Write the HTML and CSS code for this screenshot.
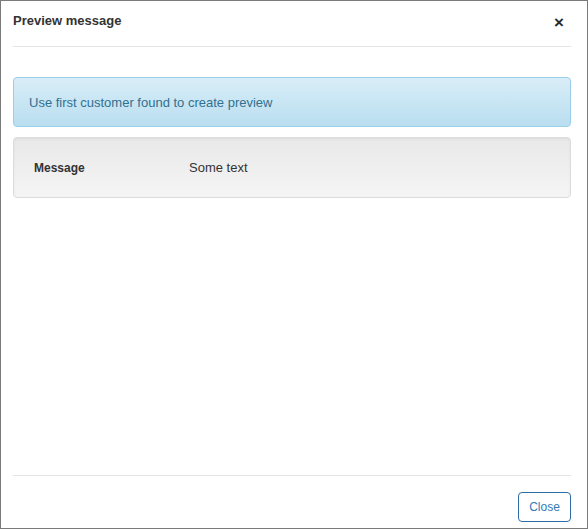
FILE: index.html
```html
<!DOCTYPE html>
<html>
<head>
<meta charset="utf-8">
<link rel="stylesheet" href="styles.css">
</head>
<body>
<div class="modal">
  <div class="modal-header">
    <h4 class="title">Preview message</h4>
    <button class="close" type="button">×</button>
  </div>
  <div class="modal-body">
    <div class="alert">Use first customer found to create preview</div>
    <div class="well">
      <span class="label">Message</span>
      <span class="value">Some text</span>
    </div>
  </div>
  <div class="modal-footer">
    <button class="btn" type="button">Close</button>
  </div>
</div>
</body>
</html>
```
FILE: styles.css
```css
html, body {
  margin: 0;
  padding: 0;
  background: #fff;
}
body {
  font-family: "Liberation Sans", Arial, sans-serif;
  color: #333;
}
.modal {
  box-sizing: border-box;
  width: 588px;
  height: 529px;
  border: 1px solid #7a7a7a;
  display: flex;
  flex-direction: column;
  background: #fff;
}
.modal-header {
  margin: 0 16px 0 12px;
  height: 45px;
  border-bottom: 1px solid #e5e5e5;
  display: flex;
  justify-content: space-between;
  align-items: flex-start;
}
.title {
  margin: 12px 0 0 0;
  font-size: 13px;
  font-weight: bold;
  line-height: 16px;
  color: #333;
}
.close {
  margin: 12px 7px 0 0;
  padding: 0;
  border: 0;
  background: none;
  font-family: "Liberation Sans", Arial, sans-serif;
  font-size: 17px;
  font-weight: bold;
  line-height: 20px;
  color: #2a2a2a;
  cursor: pointer;
}
.modal-body {
  flex: 1;
  padding: 30px 16px 0 12px;
}
.alert {
  height: 50px;
  box-sizing: border-box;
  border: 1px solid #9acfea;
  border-radius: 4px;
  background: linear-gradient(to bottom, #d9edf7 0%, #b9def0 100%);
  color: #31708f;
  font-size: 13px;
  padding: 0 15px;
  display: flex;
  align-items: center;
}
.well {
  margin-top: 10px;
  height: 61px;
  box-sizing: border-box;
  border: 1px solid #dcdcdc;
  border-radius: 4px;
  background: linear-gradient(to bottom, #e8e8e8 0%, #f5f5f5 100%);
  box-shadow: inset 0 1px 3px rgba(0,0,0,0.05);
  display: flex;
  align-items: center;
  padding: 0 20px 0 20px;
}
.label {
  width: 155px;
  font-size: 12px;
  font-weight: bold;
  color: #333;
}
.value {
  font-size: 13px;
  color: #333;
}
.modal-footer {
  margin: 0 16px 0 12px;
  height: 52px;
  border-top: 1px solid #e5e5e5;
  display: flex;
  justify-content: flex-end;
  align-items: flex-start;
}
.btn {
  margin-top: 16px;
  width: 53px;
  height: 30px;
  box-sizing: border-box;
  border: 1px solid #2e6da4;
  border-radius: 4px;
  background: #fff;
  color: #337ab7;
  font-family: "Liberation Sans", Arial, sans-serif;
  font-size: 12px;
  padding: 0;
  cursor: pointer;
}
```
